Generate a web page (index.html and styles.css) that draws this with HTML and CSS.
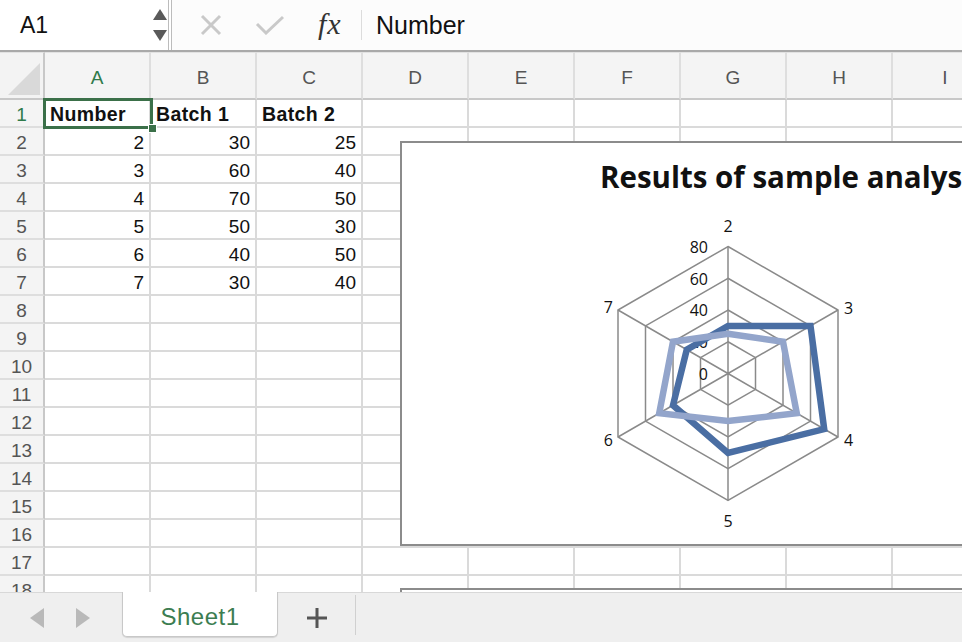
FILE: index.html
```html
<!DOCTYPE html>
<html>
<head>
<meta charset="utf-8">
<link rel="stylesheet" href="styles.css">
</head>
<body>
<div class="app">
  <div class="fbar">
    <div class="namebox">
      <span class="ref">A1</span>
      <span class="spin"><i class="up"></i><i class="down"></i></span>
    </div>
    <svg class="ic-x" width="22" height="22" viewBox="0 0 22 22"><path d="M2 2 L20 20 M20 2 L2 20" stroke="#c9c9c9" stroke-width="3" fill="none"/></svg>
    <svg class="ic-ok" width="30" height="20" viewBox="0 0 30 20"><path d="M2 9 L11 18 L28 2" stroke="#c9c9c9" stroke-width="3" fill="none"/></svg>
    <span class="fx">fx</span>
    <span class="fsep"></span>
    <span class="fval">Number</span>
  </div>

  <div class="sheet">
    <div class="grid">
      <div class="corner"><i></i></div>
      <div class="ch sel-h">A</div><div class="ch">B</div><div class="ch">C</div><div class="ch">D</div><div class="ch">E</div><div class="ch">F</div><div class="ch">G</div><div class="ch">H</div><div class="ch">I</div>

      <div class="rh sel-h">1</div><div class="c b">Number</div><div class="c b">Batch 1</div><div class="c b">Batch 2</div><div class="c"></div><div class="c"></div><div class="c"></div><div class="c"></div><div class="c"></div><div class="c"></div>
      <div class="rh">2</div><div class="c n">2</div><div class="c n">30</div><div class="c n">25</div><div class="c"></div><div class="c"></div><div class="c"></div><div class="c"></div><div class="c"></div><div class="c"></div>
      <div class="rh">3</div><div class="c n">3</div><div class="c n">60</div><div class="c n">40</div><div class="c"></div><div class="c"></div><div class="c"></div><div class="c"></div><div class="c"></div><div class="c"></div>
      <div class="rh">4</div><div class="c n">4</div><div class="c n">70</div><div class="c n">50</div><div class="c"></div><div class="c"></div><div class="c"></div><div class="c"></div><div class="c"></div><div class="c"></div>
      <div class="rh">5</div><div class="c n">5</div><div class="c n">50</div><div class="c n">30</div><div class="c"></div><div class="c"></div><div class="c"></div><div class="c"></div><div class="c"></div><div class="c"></div>
      <div class="rh">6</div><div class="c n">6</div><div class="c n">40</div><div class="c n">50</div><div class="c"></div><div class="c"></div><div class="c"></div><div class="c"></div><div class="c"></div><div class="c"></div>
      <div class="rh">7</div><div class="c n">7</div><div class="c n">30</div><div class="c n">40</div><div class="c"></div><div class="c"></div><div class="c"></div><div class="c"></div><div class="c"></div><div class="c"></div>
      <div class="rh">8</div><div class="c"></div><div class="c"></div><div class="c"></div><div class="c"></div><div class="c"></div><div class="c"></div><div class="c"></div><div class="c"></div><div class="c"></div>
      <div class="rh">9</div><div class="c"></div><div class="c"></div><div class="c"></div><div class="c"></div><div class="c"></div><div class="c"></div><div class="c"></div><div class="c"></div><div class="c"></div>
      <div class="rh">10</div><div class="c"></div><div class="c"></div><div class="c"></div><div class="c"></div><div class="c"></div><div class="c"></div><div class="c"></div><div class="c"></div><div class="c"></div>
      <div class="rh">11</div><div class="c"></div><div class="c"></div><div class="c"></div><div class="c"></div><div class="c"></div><div class="c"></div><div class="c"></div><div class="c"></div><div class="c"></div>
      <div class="rh">12</div><div class="c"></div><div class="c"></div><div class="c"></div><div class="c"></div><div class="c"></div><div class="c"></div><div class="c"></div><div class="c"></div><div class="c"></div>
      <div class="rh">13</div><div class="c"></div><div class="c"></div><div class="c"></div><div class="c"></div><div class="c"></div><div class="c"></div><div class="c"></div><div class="c"></div><div class="c"></div>
      <div class="rh">14</div><div class="c"></div><div class="c"></div><div class="c"></div><div class="c"></div><div class="c"></div><div class="c"></div><div class="c"></div><div class="c"></div><div class="c"></div>
      <div class="rh">15</div><div class="c"></div><div class="c"></div><div class="c"></div><div class="c"></div><div class="c"></div><div class="c"></div><div class="c"></div><div class="c"></div><div class="c"></div>
      <div class="rh">16</div><div class="c"></div><div class="c"></div><div class="c"></div><div class="c"></div><div class="c"></div><div class="c"></div><div class="c"></div><div class="c"></div><div class="c"></div>
      <div class="rh">17</div><div class="c"></div><div class="c"></div><div class="c"></div><div class="c"></div><div class="c"></div><div class="c"></div><div class="c"></div><div class="c"></div><div class="c"></div>
      <div class="rh">18</div><div class="c"></div><div class="c"></div><div class="c"></div><div class="c"></div><div class="c"></div><div class="c"></div><div class="c"></div><div class="c"></div><div class="c"></div>
    </div>

    <div class="selection"><i class="handle"></i></div>

    <div class="chart">
      <svg class="radar" width="720" height="400" viewBox="0 0 720 400">
        <text class="title" x="198" y="45">Results of sample analysis</text>
        <g class="gridlines" fill="none" stroke="#8a8a8a" stroke-width="1.5">
          <polygon points="326,198.75 353.5,214.6 353.5,246.4 326,262.25 298.5,246.4 298.5,214.6"/>
          <polygon points="326,167 381,198.75 381,262.25 326,294 271,262.25 271,198.75"/>
          <polygon points="326,135.25 408.5,182.9 408.5,278.1 326,325.75 243.5,278.1 243.5,182.9"/>
          <polygon points="326,103.5 436,167 436,294 326,357.5 216,294 216,167"/>
          <path d="M326 230.5 L326 103.5 M326 230.5 L436 167 M326 230.5 L436 294 M326 230.5 L326 357.5 M326 230.5 L216 294 M326 230.5 L216 167"/>
        </g>
        <g class="vals">
          <text x="306" y="110">80</text>
          <text x="306" y="142">60</text>
          <text x="306" y="173">40</text>
          <text x="306" y="205">20</text>
          <text x="306" y="237">0</text>
        </g>
        <polygon points="326,182.9 408.5,182.9 422.2,286.1 326,309.9 271,262.25 284.75,206.7" fill="none" stroke="#4a6ea3" stroke-width="6.5" stroke-linejoin="miter"/>
        <polygon points="326,190.8 381,198.75 394.75,270.2 326,278.1 257.25,270.2 271,198.75" fill="none" stroke="#93a5cb" stroke-width="6.5" stroke-linejoin="miter"/>
        <g class="cats">
          <text x="326" y="89" text-anchor="middle">2</text>
          <text x="442" y="171">3</text>
          <text x="442" y="303">4</text>
          <text x="326" y="384" text-anchor="middle">5</text>
          <text x="211" y="303" text-anchor="end">6</text>
          <text x="211" y="170" text-anchor="end">7</text>
        </g>
      </svg>
    </div>
    <div class="chart chart2"></div>
  </div>

  <div class="tabbar">
    <div class="nav">
      <i class="tri-l"></i>
      <i class="tri-r"></i>
    </div>
    <div class="tab">Sheet1</div>
    <div class="add">
      <svg width="20" height="20" viewBox="0 0 20 20"><path d="M10 0 V20 M0 10 H20" stroke="#555" stroke-width="3"/></svg>
    </div>
    <div class="tsep"></div>
  </div>
</div>
</body>
</html>
```

FILE: styles.css
```css
* { box-sizing: border-box; }
html, body { margin: 0; padding: 0; }
body {
  width: 962px;
  height: 642px;
  overflow: hidden;
  background: #fff;
  font-family: "Liberation Sans", Arial, sans-serif;
  color: #111;
}
.app {
  display: flex;
  flex-direction: column;
  width: 962px;
  height: 642px;
}

/* formula bar */
.fbar {
  flex: 0 0 52px;
  display: flex;
  align-items: center;
  background: #fcfcfc;
  border-bottom: 2px solid #a9a9a9;
}
.namebox {
  width: 172px;
  height: 50px;
  display: flex;
  align-items: center;
  background: #fff;
  border-right: 4px double #bcbcbc;
}
.ref {
  flex: 1;
  margin-left: 20px;
  font-size: 23px;
  color: #111;
}
.spin {
  display: flex;
  flex-direction: column;
  gap: 10px;
  margin-right: 1px;
}
.spin i { display: block; width: 0; height: 0; border-left: 7px solid transparent; border-right: 7px solid transparent; }
.spin .up { border-bottom: 11px solid #5a5a5a; }
.spin .down { border-top: 11px solid #5a5a5a; }
.ic-x { margin-left: 28px; }
.ic-ok { margin-left: 33px; }
.fx {
  width: 30px;
  margin-left: 33px;
  font-family: "Liberation Serif", "DejaVu Serif", serif;
  font-style: italic;
  font-size: 30px;
  color: #333;
  letter-spacing: 1px;
  line-height: 1;
  margin-top: -2px;
}
.fsep {
  width: 1px;
  height: 30px;
  margin-left: 13px;
  background: #dcdcdc;
}
.fval {
  margin-left: 14px;
  font-size: 25px;
  color: #111;
}

/* sheet */
.sheet {
  flex: 1;
  position: relative;
  overflow: hidden;
}
.grid {
  display: grid;
  grid-template-columns: 45px repeat(9, 106px);
  grid-template-rows: 48px repeat(18, 28px);
  width: 999px;
}
.corner {
  position: relative;
  background: #f3f3f3;
  border-right: 2px solid #c8c8c8;
  border-bottom: 2px solid #c8c8c8;
  border-top: 1px solid #e2e2e2;
}
.corner i {
  position: absolute;
  right: 3px;
  bottom: 3px;
  width: 0;
  height: 0;
  border-left: 32px solid transparent;
  border-bottom: 32px solid #d9d9d9;
}
.ch {
  background: #f4f4f4;
  border-top: 1px solid #e2e2e2;
  border-right: 2px solid #dedede;
  border-bottom: 2px solid #c8c8c8;
  display: flex;
  align-items: center;
  justify-content: center;
  font-size: 19px;
  color: #555;
  padding-top: 5px;
}
.rh {
  background: #f4f4f4;
  border-right: 2px solid #c8c8c8;
  border-bottom: 2px solid #dedede;
  display: flex;
  align-items: center;
  justify-content: center;
  font-size: 19px;
  color: #555;
  padding-top: 3px;
}
.sel-h { color: #2f7a4a; }
.c {
  border-right: 2px solid #dadada;
  border-bottom: 2px solid #dadada;
  font-size: 19px;
  line-height: 29px;
  color: #111;
  white-space: nowrap;
  overflow: visible;
}
.c.b { font-weight: bold; font-size: 19.5px; padding-left: 5px; letter-spacing: 0.4px; }
.c.n { text-align: right; padding-right: 5px; }

.selection {
  position: absolute;
  left: 43px;
  top: 46px;
  width: 110px;
  height: 31px;
  border: 3px solid #3b7049;
}
.selection .handle {
  position: absolute;
  right: -7px;
  bottom: -7px;
  width: 9px;
  height: 9px;
  background: #3b7049;
  border: 1px solid #fff;
}

/* charts */
.chart {
  position: absolute;
  left: 400px;
  top: 89px;
  width: 720px;
  height: 405px;
  background: #fff;
  border: 2px solid #8c8c8c;
}
.chart2 {
  top: 536px;
  height: 80px;
}
.radar { display: block; }
.radar text {
  font-family: "Open Sans", "Liberation Sans", sans-serif;
  font-size: 16px;
  fill: #111;
}
.radar .title {
  font-size: 29.5px;
  font-weight: bold;
  letter-spacing: 0;
}
.radar .vals text { text-anchor: end; }

/* tabs */
.tabbar {
  flex: 0 0 50px;
  display: flex;
  align-items: flex-start;
  background: #efefef;
  border-top: 1px solid #d8d8d8;
}
.nav {
  width: 122px;
  height: 49px;
  display: flex;
  align-items: center;
  padding-left: 30px;
  gap: 32px;
}
.tri-l, .tri-r {
  display: block;
  width: 0;
  height: 0;
  border-top: 10px solid transparent;
  border-bottom: 10px solid transparent;
}
.tri-l { border-right: 14px solid #b9b9b9; }
.tri-r { border-left: 14px solid #b9b9b9; }
.tab {
  width: 156px;
  height: 45px;
  margin-top: -1px;
  padding-top: 5px;
  background: #fff;
  border: 1px solid #c8c8c8;
  border-top: none;
  border-radius: 0 0 5px 5px;
  box-shadow: 0 1px 1px rgba(0,0,0,0.12);
  display: flex;
  align-items: center;
  justify-content: center;
  font-size: 24px;
  color: #3c7d51;
  letter-spacing: 0.5px;
}
.add {
  width: 77px;
  height: 49px;
  display: flex;
  align-items: center;
  justify-content: center;
}
.tsep {
  width: 1px;
  height: 40px;
  margin-top: 2px;
  background: #d0d0d0;
}
```
